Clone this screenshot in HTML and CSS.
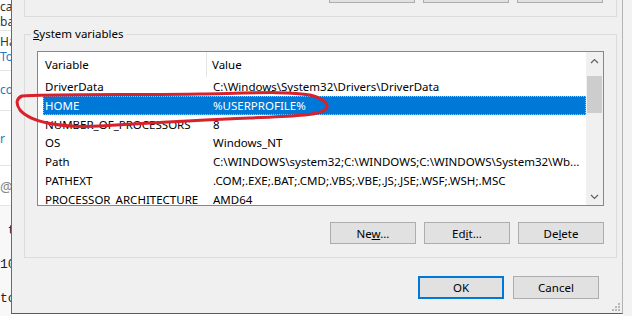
FILE: index.html
```html
<!DOCTYPE html>
<html lang="en">
<head>
  <meta charset="UTF-8">
  <title>Environment Variables</title>
  <link rel="stylesheet" href="styles.css">
</head>
<body>
  <!-- page behind the dialog, only a sliver is visible -->
  <div class="page-strip">
    <div class="ps-block ps-b1">
      <div class="ps-text ps-dark">ca</div>
      <div class="ps-text ps-dark">ba</div>
    </div>
    <div class="ps-block ps-b2">
      <div class="ps-text ps-dark">Ha</div>
      <div class="ps-text ps-link">To</div>
    </div>
    <div class="ps-block ps-b3">
      <div class="ps-text ps-link">cor</div>
    </div>
    <div class="ps-block ps-b4">
      <div class="ps-text ps-link">r</div>
    </div>
    <div class="ps-block ps-b5">
      <div class="ps-text ps-icon">@</div>
    </div>
    <div class="ps-code">
      <div class="ps-mono">&nbsp;t</div>
      <div class="ps-mono">10</div>
      <div class="ps-mono">to</div>
    </div>
  </div>

  <div class="dialog">
    <div class="group group-user">
      <div class="btn-row">
        <button class="btn">New...</button>
        <button class="btn">Edit...</button>
        <button class="btn">Delete</button>
      </div>
    </div>

    <fieldset class="group group-system">
      <legend><u>S</u>ystem variables</legend>
      <div class="listview">
        <div class="lv-body">
          <div class="lv-header">
            <div class="col-name">Variable</div>
            <div class="col-value">Value</div>
          </div>
          <div class="lv-row"><div class="col-name">DriverData</div><div class="col-value">C:\Windows\System32\Drivers\DriverData</div></div>
          <div class="lv-row selected"><div class="col-name">HOME</div><div class="col-value">%USERPROFILE%</div></div>
          <div class="lv-row"><div class="col-name">NUMBER_OF_PROCESSORS</div><div class="col-value">8</div></div>
          <div class="lv-row"><div class="col-name">OS</div><div class="col-value">Windows_NT</div></div>
          <div class="lv-row"><div class="col-name">Path</div><div class="col-value">C:\WINDOWS\system32;C:\WINDOWS;C:\WINDOWS\System32\Wb...</div></div>
          <div class="lv-row"><div class="col-name">PATHEXT</div><div class="col-value">.COM;.EXE;.BAT;.CMD;.VBS;.VBE;.JS;.JSE;.WSF;.WSH;.MSC</div></div>
          <div class="lv-row"><div class="col-name">PROCESSOR_ARCHITECTURE</div><div class="col-value">AMD64</div></div>
        </div>
        <div class="scrollbar">
          <div class="sb-arrow">
            <svg width="9" height="6" viewBox="0 0 9 6"><path d="M1 5 L4.5 1.5 L8 5" fill="none" stroke="#606060" stroke-width="1.2"/></svg>
          </div>
          <div class="sb-track"><div class="sb-thumb"></div></div>
          <div class="sb-arrow">
            <svg width="9" height="6" viewBox="0 0 9 6"><path d="M1 1 L4.5 4.5 L8 1" fill="none" stroke="#606060" stroke-width="1.2"/></svg>
          </div>
        </div>
      </div>
      <div class="btn-row">
        <button class="btn">Ne<u>w</u>...</button>
        <button class="btn">Ed<u>i</u>t...</button>
        <button class="btn">De<u>l</u>ete</button>
      </div>
    </fieldset>

    <div class="dialog-buttons">
      <button class="btn btn-default">OK</button>
      <button class="btn">Cancel</button>
    </div>

    <svg class="grip" width="8" height="8" viewBox="0 0 8 8">
      <rect x="6" y="0" width="2" height="2" fill="#b8b8b8"/>
      <rect x="3" y="3" width="2" height="2" fill="#b8b8b8"/>
      <rect x="6" y="3" width="2" height="2" fill="#b8b8b8"/>
      <rect x="0" y="6" width="2" height="2" fill="#b8b8b8"/>
      <rect x="3" y="6" width="2" height="2" fill="#b8b8b8"/>
      <rect x="6" y="6" width="2" height="2" fill="#b8b8b8"/>
    </svg>
  </div>

  <div class="right-edge"></div>

  <!-- red hand-drawn annotation around the HOME row -->
  <svg class="annotation" width="632" height="316" viewBox="0 0 632 316">
    <path d="M22 96 C40 94 150 95 200 94 C250 93 290 91 310 95 C322 98 330 104 326 109 C320 116 290 116 250 118 C200 120 150 123 100 126 C60 128 30 122 20 110 C15 103 17 98 22 96 Z"
          fill="none" stroke="#d8212b" stroke-width="3" stroke-linejoin="round"/>
  </svg>
</body>
</html>
```

FILE: styles.css
```css
body {
  margin: 0;
  width: 632px;
  height: 316px;
  overflow: hidden;
  display: flex;
  background-color: #fff;
  font-family: "Noto Sans", "Segoe UI", sans-serif;
  font-size: 11.5px;
  color: #000;
  position: relative;
}

/* sliver of the web page behind */
.page-strip {
  width: 11px;
  flex: none;
  overflow: hidden;
  display: flex;
  flex-direction: column;
  background-color: #fff;
}
.ps-block {
  border-bottom: 1px solid #e4e4e4;
  box-sizing: border-box;
  display: flex;
  flex-direction: column;
  gap: 1px;
}
.ps-b1 {
  height: 31px;
}
.ps-b2 {
  height: 40px;
  padding-top: 4px;
}
.ps-b3 {
  height: 40px;
  padding-top: 12px;
}
.ps-b4 {
  height: 55px;
  padding-top: 21px;
}
.ps-b5 {
  height: 40px;
  padding-top: 14px;
}
.ps-text {
  white-space: nowrap;
  font-size: 12px;
  line-height: 14px;
  height: 14px;
  overflow: hidden;
}
.ps-dark {
  color: #333;
}
.ps-link {
  color: #2a78c2;
}
.ps-icon {
  color: #888;
  font-size: 14px;
}
.ps-code {
  flex: 1;
  background-color: #f8f8f8;
  padding-top: 8px;
}
.ps-mono {
  font-family: "Liberation Mono", monospace;
  font-size: 13px;
  line-height: 34px;
  color: #222;
  white-space: nowrap;
  overflow: hidden;
}

/* dialog window */
.dialog {
  width: 593px;
  height: 313px;
  flex: none;
  background-color: #f0f0f0;
  border-left: 1px solid #6a6a6a;
  border-right: 1px solid #b4b4b4;
  border-bottom: 1px solid #5a5a5a;
  padding: 0 5px 0 12px;
  box-sizing: content-box;
  position: relative;
  display: flex;
  flex-direction: column;
}
.right-edge {
  flex: 1;
  background-color: #f2f2f2;
}

.group {
  border: 1px solid #dcdcdc;
  margin: 0;
}
.group-user {
  border-top: none;
  padding: 0 13px 13px;
}
.group-user .btn-row {
  margin-top: -19px;
}
.group-system {
  margin-top: 9px;
  padding: 9px 12px 13px;
  min-width: 0;
}
.group-system legend {
  padding: 0 2px;
  margin-left: -6px;
  line-height: 16px;
}

.btn-row {
  display: flex;
  justify-content: flex-end;
  gap: 8px;
}
.group-system .btn-row {
  margin-top: 16px;
}
.btn {
  width: 86px;
  height: 22px;
  padding: 0;
  background-color: #e1e1e1;
  border: 1px solid #adadad;
  font-family: inherit;
  font-size: 11.5px;
  color: #000;
}
.btn-default {
  border: 2px solid #0078d7;
}

/* list view */
.listview {
  height: 153px;
  border: 1px solid #828790;
  background-color: #fff;
  display: flex;
  overflow: hidden;
}
.lv-body {
  flex: 1;
  min-width: 0;
}
.lv-header {
  display: flex;
  height: 25px;
  align-items: center;
}
.lv-header .col-name {
  width: 161px;
  padding-left: 7px;
  height: 25px;
  line-height: 25px;
  border-right: 1px solid #e5e5e5;
}
.lv-header .col-value {
  padding-left: 5px;
}
.lv-row {
  display: flex;
  height: 18.8px;
  line-height: 19px;
  margin-left: 5px;
  white-space: nowrap;
}
.lv-row .col-name {
  width: 162px;
  padding-left: 2px;
  flex: none;
}
.lv-row .col-value {
  padding-left: 6px;
}
.lv-row.selected {
  background-color: #0078d7;
  color: #fff;
  outline: 1px dotted #9cc4ec;
  outline-offset: -1px;
}

.scrollbar {
  width: 17px;
  flex: none;
  background-color: #f0f0f0;
  display: flex;
  flex-direction: column;
}
.sb-arrow {
  height: 17px;
  display: flex;
  align-items: center;
  justify-content: center;
}
.sb-track {
  flex: 1;
  padding-top: 7px;
}
.sb-thumb {
  height: 37px;
  margin: 0 1px;
  background-color: #cdcdcd;
}

.dialog-buttons {
  display: flex;
  justify-content: flex-end;
  gap: 9px;
  margin-top: 18px;
  padding-right: 18px;
}
.dialog-buttons .btn {
  height: 23px;
}

.grip {
  position: absolute;
  right: 2px;
  bottom: 2px;
}

.annotation {
  position: absolute;
  left: 0;
  top: 0;
  pointer-events: none;
}
```
